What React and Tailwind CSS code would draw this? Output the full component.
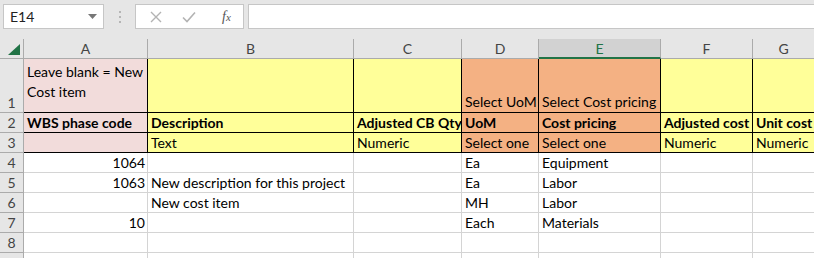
import React from 'react';

const cols = ['A', 'B', 'C', 'D', 'E', 'F', 'G'];

const PINK = 'bg-[#f2dcdb]';
const YEL = 'bg-[#ffff99]';
const ORG = 'bg-[#f4b183]';

const fills = [PINK, YEL, YEL, ORG, ORG, YEL, YEL];

const header = [
  ['WBS phase code', 'Description', 'Adjusted CB Qty', 'UoM', 'Cost pricing', 'Adjusted cost', 'Unit cost'],
  ['', 'Text', 'Numeric', 'Select one', 'Select one', 'Numeric', 'Numeric'],
];

const data = [
  ['1064', '', '', 'Ea', 'Equipment', '', ''],
  ['1063', 'New description for this project', '', 'Ea', 'Labor', '', ''],
  ['', 'New cost item', '', 'MH', 'Labor', '', ''],
  ['10', '', '', 'Each', 'Materials', '', ''],
  ['', '', '', '', '', '', ''],
  ['', '', '', '', '', '', ''],
];

function RowHead({ n, tall }) {
  return (
    <div
      className={`flex justify-center items-end bg-[#e6e6e6] border-r border-b border-[#ababab] text-[#444] pb-[1px] ${
        tall ? 'h-[54px]' : 'h-[20px]'
      }`}
    >
      {n}
    </div>
  );
}

export default function App() {
  return (
    <div
      className="w-[814px] h-[258px] overflow-hidden bg-white text-black text-[14px] leading-[17px]"
      style={{ fontFamily: 'Lato, "Open Sans", sans-serif' }}
    >
      {/* Formula bar */}
      <div className="h-[39px] bg-[#e6e6e6] flex items-start pt-[4px] pl-[3px] gap-0">
        <div className="w-[101px] h-[25px] bg-white border border-[#c6c6c6] flex items-center justify-between pl-[6px] pr-[6px] text-[14px] text-[#222]">
          <span>E14</span>
          <svg width="9" height="5" viewBox="0 0 9 5">
            <path d="M0 0 L9 0 L4.5 5 Z" fill="#777" />
          </svg>
        </div>
        <div className="w-[31px] h-[25px] flex flex-col items-center justify-center gap-[3px]">
          <span className="w-[2px] h-[2px] bg-[#b5b5b5]" />
          <span className="w-[2px] h-[2px] bg-[#b5b5b5]" />
          <span className="w-[2px] h-[2px] bg-[#b5b5b5]" />
        </div>
        <div className="w-[109px] h-[25px] bg-white border border-[#c6c6c6] flex items-center pl-[14px] gap-[20px]">
          <svg width="12" height="12" viewBox="0 0 12 12">
            <path d="M1 1 L11 11 M11 1 L1 11" stroke="#b3b3b3" strokeWidth="1.4" />
          </svg>
          <svg width="14" height="12" viewBox="0 0 14 12">
            <path d="M1 6.5 L5 10.5 L13 1.5" stroke="#b3b3b3" strokeWidth="1.6" fill="none" />
          </svg>
          <span className="ml-[6px] italic text-[14px] text-[#555]" style={{ fontFamily: '"Liberation Serif", serif' }}>
            f<span className="text-[11px]">x</span>
          </span>
        </div>
        <div className="ml-[4px] flex-1 h-[25px] bg-white border border-[#c6c6c6] border-r-0" />
      </div>

      {/* Grid */}
      <div className="grid grid-cols-[24px_124px_206px_108px_77px_122px_92px_62px]">
        {/* column header row */}
        <div className="h-[20px] bg-[#e6e6e6] border-r border-b border-[#ababab] relative">
          <svg className="absolute left-[8px] top-[5px]" width="12" height="11" viewBox="0 0 12 11">
            <path d="M12 0 L12 11 L0 11 Z" fill="#217346" />
          </svg>
        </div>
        {cols.map((c) => (
          <div
            key={c}
            className={`h-[20px] flex items-center justify-center border-r ${
              c === 'E'
                ? 'bg-[#d2d2d2] border-[#ababab] border-b-2 border-b-[#217346] text-[#217346]'
                : 'bg-[#e6e6e6] border-[#ababab] border-b text-[#444]'
            }`}
          >
            {c}
          </div>
        ))}

        {/* row 1 */}
        <RowHead n={1} tall />
        {cols.map((c, i) => (
          <div
            key={c}
            className={`h-[54px] ${fills[i]} border-r border-b border-black px-[3px] flex ${
              i === 0 ? 'items-start pt-[3px]' : 'items-end pb-[2px]'
            } ${i === 6 ? 'border-r-0' : ''}`}
          >
            {i === 0 && (
              <span className="leading-[20px] whitespace-nowrap">
                Leave blank = New
                <br />
                Cost item
              </span>
            )}
            {i === 3 && <span className="whitespace-nowrap">Select UoM</span>}
            {i === 4 && <span className="whitespace-nowrap">Select Cost pricing</span>}
          </div>
        ))}

        {/* rows 2-3 */}
        {header.map((row, r) => (
          <React.Fragment key={r}>
            <RowHead n={r + 2} />
            {row.map((v, i) => (
              <div
                key={i}
                className={`h-[20px] ${fills[i]} border-r border-b border-black px-[3px] flex items-end pb-[1px] whitespace-nowrap overflow-hidden ${
                  r === 0 ? 'font-bold' : ''
                } ${i === 6 ? 'border-r-0' : ''}`}
              >
                {v}
              </div>
            ))}
          </React.Fragment>
        ))}

        {/* data rows */}
        {data.map((row, r) => (
          <React.Fragment key={r}>
            <RowHead n={r + 4} />
            {row.map((v, i) => (
              <div
                key={i}
                className={`h-[20px] border-r border-b border-[#d4d4d4] px-[3px] pr-[2px] flex items-end pb-[1px] whitespace-nowrap overflow-hidden ${
                  i === 0 ? 'justify-end' : ''
                }`}
              >
                {v}
              </div>
            ))}
          </React.Fragment>
        ))}
      </div>
    </div>
  );
}
